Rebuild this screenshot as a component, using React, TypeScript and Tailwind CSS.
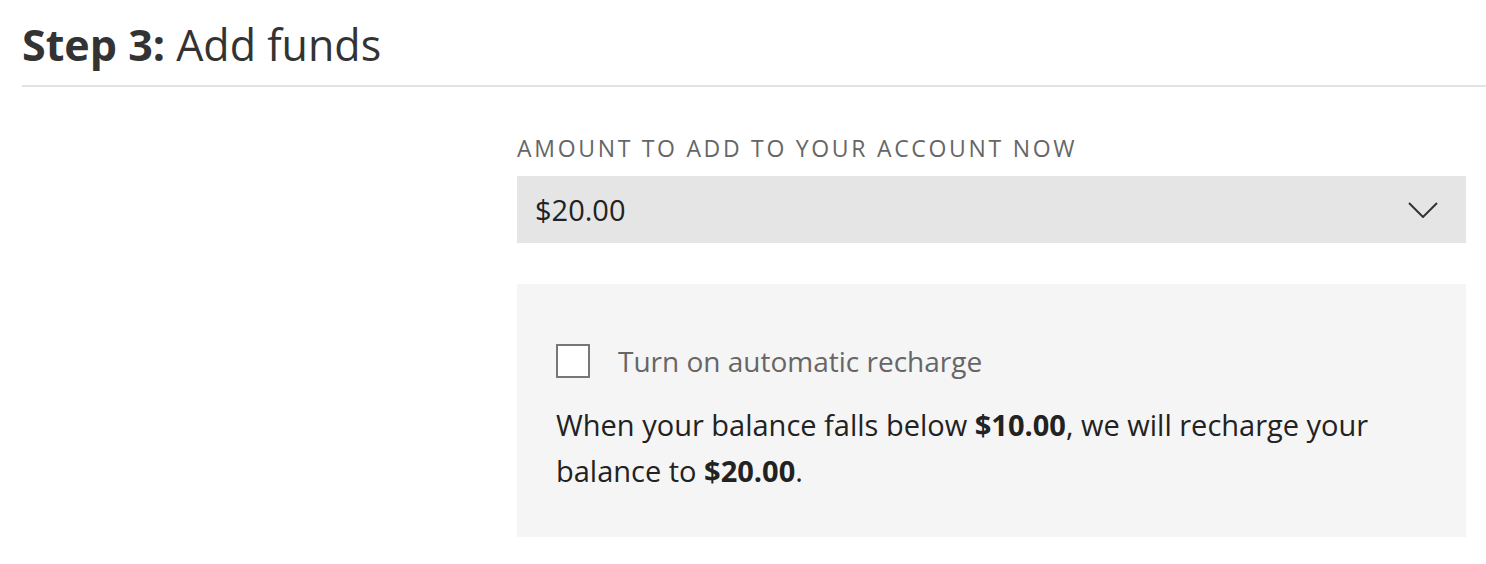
import React from "react";

export default function App() {
  return (
    <div className="w-[1486px] h-[564px] bg-white font-['Open_Sans',sans-serif] text-[#222]">
      <div className="pl-[22px] pt-[21px]">
        <h1 className="text-[43px] leading-[48px] text-[#333]">
          <span className="font-bold">Step 3:</span> Add funds
        </h1>
        <div className="mt-[16px] h-[2px] bg-[#e3e3e3]" />
      </div>
      <div className="flex">
        <div className="w-[517px] shrink-0" />
        <div className="w-[949px]">
          <div className="mt-[46px] text-[23px] leading-[30px] tracking-[2.7px] text-[#666] uppercase">
            Amount to add to your account now
          </div>
          <div className="mt-[13px] h-[67px] bg-[#e5e5e5] flex items-center justify-between pl-[18px] pr-[28px]">
            <span className="text-[29px] leading-[43px] text-[#222]">$20.00</span>
            <svg width="30" height="16" viewBox="0 0 30 16" fill="none">
              <path d="M1 1 L15 15 L29 1" stroke="#333" strokeWidth="2" />
            </svg>
          </div>
          <div className="mt-[41px] h-[253px] bg-[#f5f5f5] pl-[39px] pr-[40px] pt-[56px]">
            <div className="flex items-center gap-[28px] h-[42px]">
              <div className="w-[34px] h-[34px] bg-white border-2 border-[#777]" />
              <span className="text-[28px] leading-[42px] text-[#666]">Turn on automatic recharge</span>
            </div>
            <p className="mt-[20px] text-[29px] leading-[46px] text-[#222]">
              When your balance falls below <b>$10.00</b>, we will recharge your
              <br />
              balance to <b>$20.00</b>.
            </p>
          </div>
        </div>
      </div>
    </div>
  );
}
